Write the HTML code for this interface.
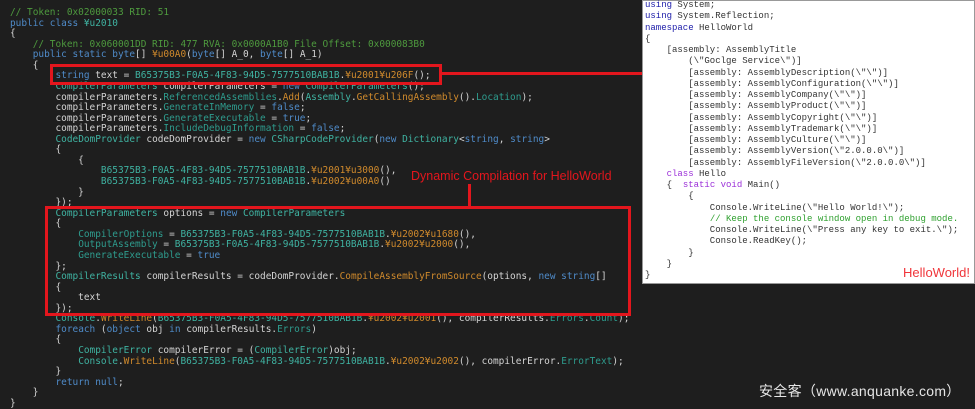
<!DOCTYPE html>
<html><head><meta charset="utf-8"><style>
body{margin:0;width:975px;height:409px;background:#1e1e1e;overflow:hidden;position:relative;font-family:"Liberation Mono",monospace}
pre{margin:0;position:absolute;white-space:pre}
#code{left:10px;top:8px;font-size:9.45px;line-height:10.57px;color:#d4d4d4}
.c{color:#4e9a3e}.k{color:#4f8bc9}.t{color:#3fb3a2}.m{color:#d08a2c}.p{color:#2e9c8e}
.box{position:absolute;border:3px solid #e3161d;box-sizing:border-box}
#panel{position:absolute;left:642px;top:0;width:333px;height:284px;background:#fff;border:1px solid #999;box-sizing:border-box}
#hw{left:2px;top:-1px;font-size:9px;line-height:11.25px;color:#333;font-family:"Liberation Mono",monospace}
.b{color:#1a1aa8}.v{color:#9b30d8}.g{color:#2ea02e}
</style></head><body>
<pre id="code"><span class="c">// Token: 0x02000033 RID: 51</span>
<span class="k">public class</span> <span class="t">¥u2010</span>
{
    <span class="c">// Token: 0x060001DD RID: 477 RVA: 0x0000A1B0 File Offset: 0x000083B0</span>
    <span class="k">public static byte</span>[] <span class="m">¥u00A0</span>(<span class="k">byte</span>[] A_0, <span class="k">byte</span>[] A_1)
    {
        <span class="k">string</span> text = <span class="t">B65375B3-F0A5-4F83-94D5-7577510BAB1B</span>.<span class="m">¥u2001¥u206F</span>();
        <span class="t">CompilerParameters</span> compilerParameters = <span class="k">new</span> <span class="t">CompilerParameters</span>();
        compilerParameters.<span class="p">ReferencedAssemblies</span>.<span class="m">Add</span>(<span class="t">Assembly</span>.<span class="m">GetCallingAssembly</span>().<span class="p">Location</span>);
        compilerParameters.<span class="p">GenerateInMemory</span> = <span class="k">false</span>;
        compilerParameters.<span class="p">GenerateExecutable</span> = <span class="k">true</span>;
        compilerParameters.<span class="p">IncludeDebugInformation</span> = <span class="k">false</span>;
        <span class="t">CodeDomProvider</span> codeDomProvider = <span class="k">new</span> <span class="t">CSharpCodeProvider</span>(<span class="k">new</span> <span class="t">Dictionary</span>&lt;<span class="k">string</span>, <span class="k">string</span>&gt;
        {
            {
                <span class="t">B65375B3-F0A5-4F83-94D5-7577510BAB1B</span>.<span class="m">¥u2001¥u3000</span>(),
                <span class="t">B65375B3-F0A5-4F83-94D5-7577510BAB1B</span>.<span class="m">¥u2002¥u00A0</span>()
            }
        });
        <span class="t">CompilerParameters</span> options = <span class="k">new</span> <span class="t">CompilerParameters</span>
        {
            <span class="p">CompilerOptions</span> = <span class="t">B65375B3-F0A5-4F83-94D5-7577510BAB1B</span>.<span class="m">¥u2002¥u1680</span>(),
            <span class="p">OutputAssembly</span> = <span class="t">B65375B3-F0A5-4F83-94D5-7577510BAB1B</span>.<span class="m">¥u2002¥u2000</span>(),
            <span class="p">GenerateExecutable</span> = <span class="k">true</span>
        };
        <span class="t">CompilerResults</span> compilerResults = codeDomProvider.<span class="m">CompileAssemblyFromSource</span>(options, <span class="k">new string</span>[]
        {
            text
        });
        <span class="t">Console</span>.<span class="m">WriteLine</span>(<span class="t">B65375B3-F0A5-4F83-94D5-7577510BAB1B</span>.<span class="m">¥u2002¥u2001</span>(), compilerResults.<span class="p">Errors</span>.<span class="p">Count</span>);
        <span class="k">foreach</span> (<span class="k">object</span> obj <span class="k">in</span> compilerResults.<span class="p">Errors</span>)
        {
            <span class="t">CompilerError</span> compilerError = (<span class="t">CompilerError</span>)obj;
            <span class="t">Console</span>.<span class="m">WriteLine</span>(<span class="t">B65375B3-F0A5-4F83-94D5-7577510BAB1B</span>.<span class="m">¥u2002¥u2002</span>(), compilerError.<span class="p">ErrorText</span>);
        }
        <span class="k">return null</span>;
    }
}</pre>
<div class="box" style="left:50px;top:64px;width:392px;height:21px"></div>
<div style="position:absolute;left:441px;top:72px;width:202px;height:3px;background:#e3161d"></div>
<div class="box" style="left:45px;top:206px;width:586px;height:110px"></div>
<div style="position:absolute;left:468px;top:184px;width:3px;height:23px;background:#e3161d"></div>
<div style="position:absolute;left:411px;top:169px;font:12.5px 'Liberation Sans',sans-serif;color:#e3161d">Dynamic Compilation for HelloWorld</div>
<div id="panel">
<pre id="hw"><span class="b">using</span> System;
<span class="b">using</span> System.Reflection;
<span class="b">namespace</span> HelloWorld
{
    [assembly: AssemblyTitle
        (\"Goclge Service\")]
        [assembly: AssemblyDescription(\"\")]
        [assembly: AssemblyConfiguration(\"\")]
        [assembly: AssemblyCompany(\"\")]
        [assembly: AssemblyProduct(\"\")]
        [assembly: AssemblyCopyright(\"\")]
        [assembly: AssemblyTrademark(\"\")]
        [assembly: AssemblyCulture(\"\")]
        [assembly: AssemblyVersion(\"2.0.0.0\")]
        [assembly: AssemblyFileVersion(\"2.0.0.0\")]
    <span class="v">class</span> Hello
    {  <span class="v">static void</span> Main()
        {
            Console.WriteLine(\"Hello World!\");
            <span class="g">// Keep the console window open in debug mode.</span>
            Console.WriteLine(\"Press any key to exit.\");
            Console.ReadKey();
        }
    }
}</pre>
<div style="position:absolute;right:4px;top:264px;font:13px 'Liberation Sans',sans-serif;color:#f0353a">HelloWorld!</div>
</div>
<div style="position:absolute;left:759px;top:381px;font:14px 'Liberation Sans','Noto Sans CJK SC',sans-serif;color:#e6e6e6;letter-spacing:0.3px">安全客（www.anquanke.com）</div>
</body></html>
